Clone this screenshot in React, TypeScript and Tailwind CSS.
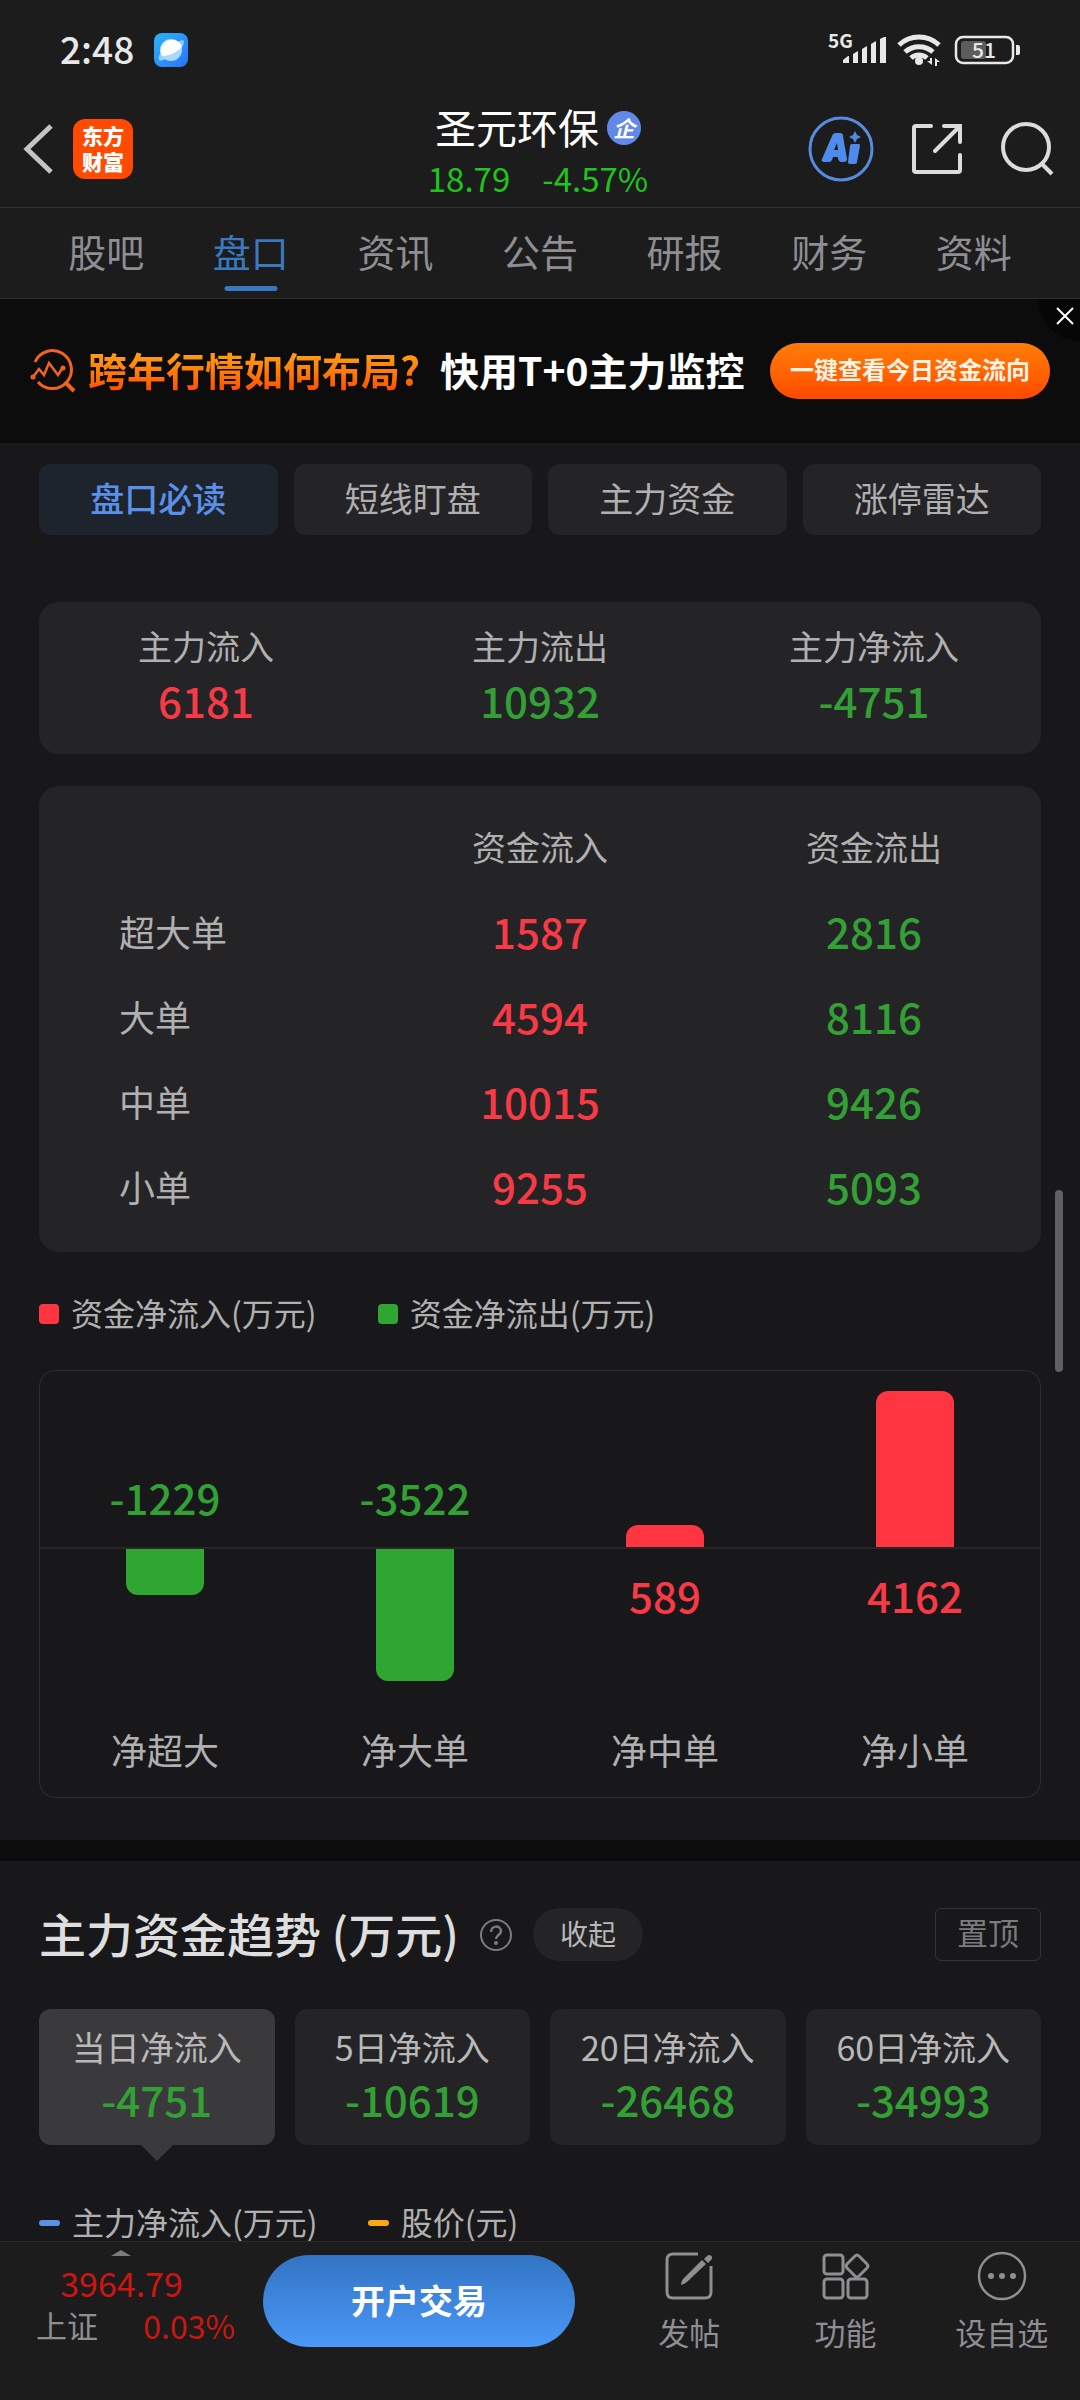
import { useState } from 'react';
import clsx from 'clsx';

const TABS = ['股吧', '盘口', '资讯', '公告', '研报', '财务', '资料'];
const CHIPS = ['盘口必读', '短线盯盘', '主力资金', '涨停雷达'];

const SUMMARY = [
  { label: '主力流入', value: '6181', up: true },
  { label: '主力流出', value: '10932', up: false },
  { label: '主力净流入', value: '-4751', up: false },
];

const ORDERS = [
  { label: '超大单', inflow: 1587, outflow: 2816 },
  { label: '大单', inflow: 4594, outflow: 8116 },
  { label: '中单', inflow: 10015, outflow: 9426 },
  { label: '小单', inflow: 9255, outflow: 5093 },
];

const NET_FLOWS = [
  { label: '净超大', value: -1229 },
  { label: '净大单', value: -3522 },
  { label: '净中单', value: 589 },
  { label: '净小单', value: 4162 },
];

const RANGES = [
  { label: '当日净流入', value: '-4751' },
  { label: '5日净流入', value: '-10619' },
  { label: '20日净流入', value: '-26468' },
  { label: '60日净流入', value: '-34993' },
];

// px per 万元 in the bar chart
const BAR_SCALE = 0.0375;

function StatusBar() {
  return (
    <div className="flex h-[92px] items-center justify-between pt-2 pr-[60px] pl-[60px] text-[#e8e8e8]">
      <div className="flex items-center gap-5">
        <span className="pb-1 text-[37px] leading-10 font-medium">2:48</span>
        <svg width="34" height="34" viewBox="0 0 34 34" aria-hidden="true">
          <defs>
            <linearGradient id="planetBg" x1="0" y1="0" x2="1" y2="1">
              <stop offset="0" stopColor="#2bb4f7" />
              <stop offset="1" stopColor="#2a74f8" />
            </linearGradient>
          </defs>
          <rect width="34" height="34" rx="8" fill="url(#planetBg)" />
          <path d="M5 27c-1-3 0-5 2-7L24 9c3-2 5-2 6-1 0 4-2 6-5 9L11 26c-3 2-5 2-6 1z" fill="#8fd0ff" />
          <circle cx="17" cy="17" r="11" fill="#a9d8ff" />
          <path d="M8 23A11 11 0 1 1 28 14C23 19 16 23 8 23z" fill="#fff" />
        </svg>
      </div>
      <svg width="200" height="48" viewBox="820 26 200 48" fill="none" aria-label="5G 信号, Wi-Fi, 电量 51%">
        <text x="828" y="48" fontSize="19" fontWeight="700" fill="#e8e8e8">5G</text>
        <g fill="#e8e8e8">
          <path d="M843 63v-3l5-4h1v7z" />
          <path d="M853 63V54l5-3v12z" />
          <path d="M862 63V49l5-3v17z" />
          <path d="M871 63V44l5-3v22z" />
          <path d="M880 63V39l4-2h2v26z" />
          <circle cx="919" cy="61" r="4" />
          <path d="M932 58v7l-5-4h3v-3zM935 66v-8l5 4h-3v4z" />
        </g>
        <g stroke="#e8e8e8" strokeWidth="5">
          <path d="M899 45a29 29 0 0 1 40 0" />
          <path d="M905 52a21 21 0 0 1 28 0" />
          <path d="M911 58a12 12 0 0 1 16 0" />
        </g>
        <rect x="956" y="37" width="57" height="26" rx="7" stroke="#e8e8e8" strokeWidth="2.5" />
        <rect x="961" y="41" width="25" height="18" rx="3" fill="#5c5c5c" />
        <path d="M1016 45h2q2 0 2 2v6q0 2-2 2h-2z" fill="#e8e8e8" />
        <text x="984" y="58" fontSize="21" fontWeight="500" textAnchor="middle" fill="#e8e8e8">51</text>
      </svg>
    </div>
  );
}

function Header() {
  return (
    <header className="grid h-[116px] grid-cols-[1fr_auto_1fr] items-center border-b border-[#333335] pr-[26px] pb-[2px] pl-[22px]">
      <div className="flex items-center gap-5">
        <button aria-label="返回">
          <svg width="31" height="52" viewBox="0 0 31 52" fill="none" stroke="#c4c4c4" strokeWidth="5">
            <path d="M29 3 5 26l24 23" />
          </svg>
        </button>
        <button className="grid size-[60px] place-content-center rounded-xl bg-[#ff4a00] pb-[2px] text-[21px] leading-[26px] font-black text-white">
          东方
          <br />
          财富
        </button>
      </div>
      <div className="flex flex-col items-center pt-[6px]">
        <h1 className="flex items-center gap-2 text-[41px] leading-[52px] text-white">
          圣元环保
          <span className="mt-1 grid size-[34px] place-content-center rounded-full bg-[#6288e8] pb-[2px] text-[22px] leading-6 font-bold italic">企</span>
        </h1>
        <p className="flex gap-8 text-[33px] leading-[52px] text-[#1fc41f]">
          <span>18.79</span>
          <span>-4.57%</span>
        </p>
      </div>
      <div className="flex items-center justify-end gap-9">
        <button aria-label="AI">
          <svg width="66" height="66" viewBox="0 0 66 66" fill="none">
            <circle cx="33" cy="33" r="31" stroke="#568be0" strokeWidth="3" />
            <path
              d="M24 20q1-3 4-3h4q3 0 3 3l4 23q0 3-3 3h-3q-2 0-3-3v-2h-5l-1 3q-1 2-3 2h-5q-3 0-2-3zM26 34h4l-1-7z"
              fill="#4f8bea"
              fillRule="evenodd"
            />
            <path d="M44 28h7q1 0 1 2l-3 16q0 2-2 2h-5q-2 0-2-2l2-16q0-2 2-2z" fill="#4f8bea" />
            <path d="m47 15 2 4 4 2-4 2-2 4-2-4-4-2 4-2z" fill="#4f8bea" />
          </svg>
        </button>
        <button aria-label="分享">
          <svg width="54" height="54" viewBox="0 0 54 54" fill="none" stroke="#dcdcdc" strokeWidth="4" strokeLinecap="round">
            <path d="M21 4H6q-2 0-2 2v42q0 2 2 2h42q2 0 2-2V33" />
            <path d="M34 4h16v16M50 4 25 29" />
          </svg>
        </button>
        <button aria-label="搜索">
          <svg width="54" height="54" viewBox="0 0 54 54" fill="none" stroke="#dcdcdc" strokeWidth="4">
            <circle cx="26" cy="25" r="23" />
            <path d="m41 41 11 11" />
          </svg>
        </button>
      </div>
    </header>
  );
}

function Banner() {
  return (
    <div className="relative flex h-36 items-center overflow-hidden bg-[#0c0c0c] px-[30px]">
      <svg width="46" height="46" viewBox="0 0 46 46" fill="none" stroke="#f06420" strokeWidth="3" className="shrink-0" aria-hidden="true">
        <path d="M5 14A19 19 0 1 1 8 34" />
        <path d="m35 34 9 9" strokeWidth="4" />
        <path d="m3 29 6-8 5 6 5-12 9 12 5-8" strokeWidth="2.5" />
        <circle cx="3" cy="29" r="1" />
        <circle cx="33" cy="20" r="1" />
      </svg>
      <span className="ml-3 bg-linear-to-b from-[#ff9a10] from-25% to-[#ff5200] to-80% bg-clip-text pb-1 text-[39px] leading-[56px] font-bold whitespace-nowrap text-transparent">
        跨年行情如何布局?
      </span>
      <span className="ml-5 pb-1 text-[39px] leading-[56px] font-bold whitespace-nowrap text-white">快用T+0主力监控</span>
      <button className="ml-auto h-14 rounded-full bg-linear-to-b from-[#ff7d08] to-[#ff4800] px-5 pb-1 text-[24px] font-bold whitespace-nowrap text-[#fff3e4]">
        一键查看今日资金流向
      </button>
      <button aria-label="关闭" className="absolute top-0 right-0 grid size-[42px] place-content-center rounded-bl-full bg-[#060606] pr-0 pb-2 pl-3">
        <svg width="18" height="18" viewBox="0 0 18 18" stroke="#fff" strokeWidth="2">
          <path d="m1 1 16 16M17 1 1 17" />
        </svg>
      </button>
    </div>
  );
}

function NetFlowChart() {
  return (
    <div className="mt-[38px] grid grid-cols-4 overflow-hidden rounded-2xl border border-[#2e2e30]">
      {NET_FLOWS.map(({ label, value }) => {
        const up = value > 0;
        const height = Math.round(Math.abs(value) * BAR_SCALE);
        return (
          <div key={label}>
            <div className="flex h-[178px] flex-col items-center justify-end border-b-2 border-[#262628]">
              {up ? (
                <div className="w-[78px] rounded-t-xl bg-[#ff3541]" style={{ height }} />
              ) : (
                <span className="mb-5 text-[42px] leading-[60px] font-medium text-[#33a035]">{value}</span>
              )}
            </div>
            <div className="flex h-[172px] flex-col items-center">
              {up ? (
                <span className="mt-4 text-[42px] leading-[60px] font-medium text-[#f73a45]">{value}</span>
              ) : (
                <div className="w-[78px] rounded-b-xl bg-[#2fa532]" style={{ height }} />
              )}
            </div>
            <p className="pb-5 text-center text-[36px] leading-[56px] text-[#b0b0b0]">{label}</p>
          </div>
        );
      })}
    </div>
  );
}

function BottomBar() {
  return (
    <footer className="sticky bottom-0 mt-auto flex h-[159px] items-start border-t border-[#2a2a2b] bg-[#1c1c1c] text-[#8e8e93]">
      <button className="flex w-[263px] shrink-0 flex-col items-stretch pt-2 pr-7 pl-9">
        <svg width="20" height="6" viewBox="0 0 20 6" className="ml-[75px]" aria-hidden="true">
          <path d="M10 0 20 6H0z" fill="#7c7c7f" />
        </svg>
        <span className="mt-[6px] pr-7 text-center text-[34px] leading-[42px] text-[#cd1512]">3964.79</span>
        <span className="flex justify-between leading-[42px]">
          <span className="text-[31px]">上证</span>
          <span className="text-[32px] text-[#cd1512]">0.03%</span>
        </span>
      </button>
      <button className="mt-[13px] h-[92px] w-[312px] shrink-0 rounded-full bg-linear-to-b from-[#3274c4] to-[#4a98f8] pb-1 text-[34px] font-bold text-white">
        开户交易
      </button>
      <nav className="ml-9 grid flex-1 grid-cols-3 pt-[9px] text-[31px] leading-10 whitespace-nowrap">
        <button className="flex flex-col items-center gap-[11px]">
          <svg width="50" height="50" viewBox="0 0 50 50" fill="none" stroke="currentColor" strokeWidth="3">
            <path d="M34 3H9Q3 3 3 9v32q0 6 6 6h32q6 0 6-6V15" />
            <path d="M17 34c0-3 1-5 3-7L38 9l4 4-18 17c-2 2-4 3-7 4z" fill="currentColor" stroke="none" />
            <path d="m40 8 3-3c3-3 7 1 4 4l-3 3z" fill="currentColor" stroke="none" />
          </svg>
          发帖
        </button>
        <button className="flex flex-col items-center gap-[11px]">
          <svg width="50" height="50" viewBox="0 0 50 50" fill="none" stroke="currentColor" strokeWidth="3">
            <rect x="4" y="4" width="19" height="19" rx="3" />
            <rect x="4" y="28" width="19" height="19" rx="3" />
            <rect x="28" y="28" width="19" height="19" rx="3" />
            <path d="m35 5 q2-2 4 0l8 8q2 2 0 4l-8 8q-2 2-4 0l-8-8q-2-2 0-4z" />
          </svg>
          功能
        </button>
        <button className="flex flex-col items-center gap-[11px]">
          <svg width="50" height="50" viewBox="0 0 50 50" fill="none" stroke="currentColor" strokeWidth="2.5">
            <circle cx="25" cy="25" r="23" />
            <g fill="currentColor" stroke="none">
              <circle cx="14" cy="25" r="3" />
              <circle cx="25" cy="25" r="3" />
              <circle cx="36" cy="25" r="3" />
            </g>
          </svg>
          设自选
        </button>
      </nav>
    </footer>
  );
}

export default function App() {
  const [tab, setTab] = useState('盘口');
  const [chip, setChip] = useState('盘口必读');
  const [range, setRange] = useState('当日净流入');

  return (
    <div className="relative flex min-h-screen flex-col bg-[#18181a] font-['Noto_Sans_CJK_SC',sans-serif]">
      <div className="bg-[#1c1c1c]">
        <StatusBar />
        <Header />
        <nav className="grid h-[91px] grid-cols-7 border-b border-[#2e2e30] px-[34px]">
          {TABS.map((t) => (
            <button
              key={t}
              onClick={() => setTab(t)}
              className={clsx('relative pb-[6px] text-[38px]', t === tab ? 'text-[#3a78bf]' : 'text-[#8e8e93]')}
            >
              {t}
              {t === tab && <span className="absolute bottom-[7px] left-1/2 h-[5px] w-[53px] -translate-x-1/2 rounded-full bg-[#3a78bf]" />}
            </button>
          ))}
        </nav>
      </div>
      <Banner />

      <main>
        <section className="px-[39px] pt-[21px] pb-[42px]">
          <div className="grid grid-cols-4 gap-4">
            {CHIPS.map((c) => (
              <button
                key={c}
                onClick={() => setChip(c)}
                className={clsx(
                  'h-[71px] rounded-xl pb-1 text-[34px]',
                  c === chip ? 'bg-[#1e242e] font-medium text-[#5a90e8]' : 'bg-[#242426] text-[#b0b0b0]'
                )}
              >
                {c}
              </button>
            ))}
          </div>

          <div className="mt-[67px] grid grid-cols-3 rounded-[20px] bg-[#242426] pt-[26px] pb-6 text-center">
            {SUMMARY.map((s) => (
              <div key={s.label}>
                <p className="text-[34px] leading-9 text-[#b0b0b0]">{s.label}</p>
                <p className={clsx('mt-[6px] text-[42px] leading-[60px] font-medium', s.up ? 'text-[#f73a45]' : 'text-[#33a035]')}>{s.value}</p>
              </div>
            ))}
          </div>

          <div className="mt-8 rounded-[20px] bg-[#242426] pt-[18px] pb-6">
            <table className="w-full table-fixed text-center text-[#b0b0b0]">
              <thead>
                <tr className="h-[84px] text-[34px]">
                  <td />
                  <th className="font-normal">资金流入</th>
                  <th className="font-normal">资金流出</th>
                </tr>
              </thead>
              <tbody>
                {ORDERS.map((o) => (
                  <tr key={o.label} className="h-[85px] text-[42px] leading-[60px] font-medium">
                    <th className="pl-20 text-left text-[36px] font-normal">{o.label}</th>
                    <td className="text-[#f73a45]">{o.inflow}</td>
                    <td className="text-[#33a035]">{o.outflow}</td>
                  </tr>
                ))}
              </tbody>
            </table>
          </div>

          <div className="mt-10 flex gap-[61px] text-[32px] leading-10 text-[#b0b0b0]">
            <span className="flex items-center gap-3">
              <i className="mt-1 size-5 rounded bg-[#ff3541]" />
              资金净流入(万元)
            </span>
            <span className="flex items-center gap-3">
              <i className="mt-1 size-5 rounded bg-[#2fa532]" />
              资金净流出(万元)
            </span>
          </div>
          <NetFlowChart />
        </section>

        <section className="border-t-[21px] border-[#0c0c0c] px-[39px] pt-[47px]">
          <div className="flex h-[53px] items-center">
            <h2 className="pb-1 text-[47px] leading-[52px] font-medium whitespace-nowrap text-[#dedede]">主力资金趋势 (万元)</h2>
            <button aria-label="说明" className="ml-5">
              <svg width="34" height="34" viewBox="0 0 34 34" fill="none" stroke="#7c7c7f" strokeWidth="2">
                <circle cx="17" cy="17" r="15" />
                <path d="M12 14c0-7 10-7 10-1 0 4-5 4-5 8" strokeWidth="2.5" />
                <circle cx="17" cy="25" r="1" />
              </svg>
            </button>
            <button className="ml-5 h-[53px] w-[110px] rounded-full bg-[#242426] pb-1 text-[28px] text-[#b8b8b8]">收起</button>
            <button className="ml-auto h-[53px] w-[106px] rounded-md border border-[#343436] pb-1 text-[31px] text-[#7c7c7f]">置顶</button>
          </div>

          <div className="mt-12 grid grid-cols-4 gap-5">
            {RANGES.map((r) => (
              <button
                key={r.label}
                onClick={() => setRange(r.label)}
                className={clsx('relative rounded-xl pt-[18px] pb-[14px] whitespace-nowrap', r.label === range ? 'bg-[#3a3a3c]' : 'bg-[#242426]')}
              >
                <span className="block text-[34px] leading-10 text-[#b8b8b8]">{r.label}</span>
                <span className="block text-[42px] leading-[64px] font-medium text-[#33a035]">{r.value}</span>
                {r.label === range && (
                  <svg width="32" height="16" viewBox="0 0 32 16" className="absolute top-full left-1/2 -translate-x-1/2">
                    <path d="M0 0h32L16 16z" fill="#3a3a3c" />
                  </svg>
                )}
              </button>
            ))}
          </div>

          <div className="mt-14 flex gap-[50px] text-[32px] leading-10 text-[#b0b0b0]">
            <span className="flex items-center gap-3">
              <i className="mt-1 h-[6px] w-[21px] rounded-full bg-[#5a90e8]" />
              主力净流入(万元)
            </span>
            <span className="flex items-center gap-3">
              <i className="mt-1 h-[6px] w-[21px] rounded-full bg-[#f9a914]" />
              股价(元)
            </span>
          </div>
        </section>
      </main>

      <BottomBar />
      {/* scroll indicator */}
      <div className="absolute top-[1190px] right-[17px] h-[182px] w-2 rounded-full bg-[#606062]" />
    </div>
  );
}
